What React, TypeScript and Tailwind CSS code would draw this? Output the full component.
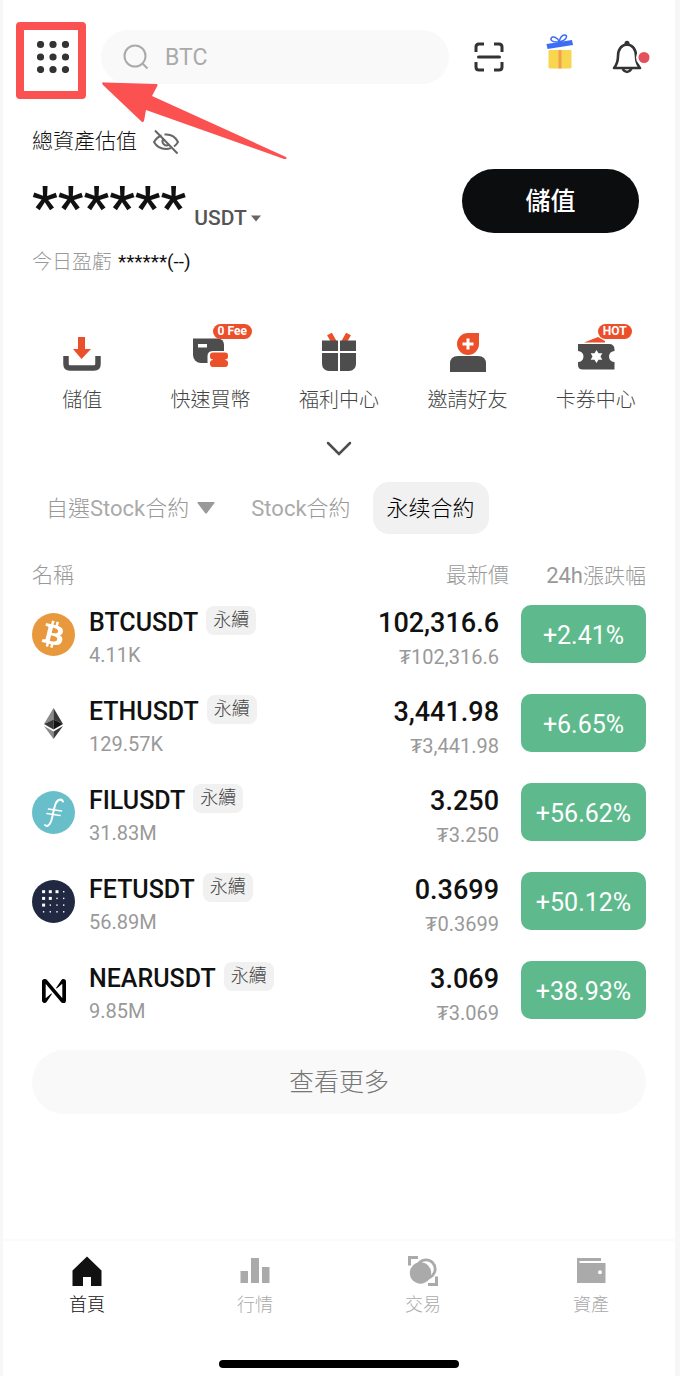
import type { ReactNode } from "react";
import { FaBtc } from "react-icons/fa";

const QUICK_ACTIONS: { label: string; icon: ReactNode; badge?: string }[] = [
  {
    label: "儲值",
    icon: (
      <>
        <path d="M6 24v8q0 4 4 4h24q4 0 4-4v-8" fill="none" stroke="#4d4d4d" strokeWidth="5.5" />
        <path d="M18 5h7v12h6l-9.500 10-8.500-10h5z" fill="#eb502b" />
      </>
    ),
  },
  {
    label: "快速買幣",
    badge: "0 Fee",
    icon: (
      <>
        <path d="M4 6.500h25a6 6 0 0 1 6 6V31H12a8 8 0 0 1-8-8z" fill="#4d4d4d" />
        <rect x="9" y="12" width="9" height="3.500" fill="#fff" />
        <path d="M18.500 32v-8q0-5 6-5H36v13z" fill="#fff" />
        <rect x="21" y="20.500" width="18" height="7" rx="3" fill="#eb502b" />
        <rect x="21" y="28" width="18" height="7" rx="3" fill="#eb502b" />
        <path d="M24 27h12v1.500H24z" fill="#eb502b" />
      </>
    ),
  },
  {
    label: "福利中心",
    icon: (
      <>
        <path d="m12.500 2 4.500 8M31.500 2 27 10" stroke="#eb502b" strokeWidth="5.500" />
        <path d="M5 8.500h16V19H5zM23 8.500h16V19H23zM5 21h16v18H12a7 7 0 0 1-7-7zM23 21h16v11a7 7 0 0 1-7 7h-9z" fill="#4d4d4d" />
      </>
    ),
  },
  {
    label: "邀請好友",
    icon: (
      <>
        <path d="M5 40v-8q0-8 8-8h20q8 0 8 8v8z" fill="#4d4d4d" />
        <path d="M23 1h11v11A11 11 0 1 1 23 1z" fill="#eb502b" />
        <path d="M23 6.500v11M17.500 12h11" stroke="#fff" strokeWidth="3" />
      </>
    ),
  },
  {
    label: "卡券中心",
    badge: "HOT",
    icon: (
      <>
        <path d="m10 10.500 14-5.500 7 4v1.500z" fill="#eb502b" />
        <path d="M4 12h31q5.500 0 5.500 5.500V19a5.500 5.500 0 0 0 0 11v7.500H9Q4 37.500 4 33v-3a5.500 5.500 0 0 0 0-11z" fill="#4d4d4d" />
        <path d="m22.500 18 2 3.300 3.800-.1-1.800 3.300 1.800 3.300-3.800-.1-2 3.300-2-3.300-3.800.1 1.800-3.300-1.800-3.300 3.800.1z" fill="#fff" />
      </>
    ),
  },
];

const FET_DOTS = [
  [1, 1, 1, 0],
  [1, 1, 0, 0],
  [1, 0, 0, 0],
  [0, 0, 0, 0],
];

const COINS: { name: string; volume: string; price: string; change: string; icon: ReactNode }[] = [
  {
    name: "BTCUSDT",
    volume: "4.11K",
    price: "102,316.6",
    change: "+2.41%",
    icon: (
      <span className="flex size-[43px] items-center justify-center rounded-full bg-[#e8983d] text-white">
        <FaBtc className="size-[27px] rotate-14" />
      </span>
    ),
  },
  {
    name: "ETHUSDT",
    volume: "129.57K",
    price: "3,441.98",
    change: "+6.65%",
    icon: (
      <svg viewBox="0 0 43 43" className="size-[43px]">
        <path d="M21.500 6 12 22l9.500-4.500z" fill="#8a8a8a" />
        <path d="m21.500 6 9.500 16-9.500-4.500z" fill="#393939" />
        <path d="m12 22 9.500-4.500v10z" fill="#393939" />
        <path d="m31 22-9.500-4.500v10z" fill="#141414" />
        <path d="m12 24 9.500 5.500v7.500z" fill="#8a8a8a" />
        <path d="m31 24-9.500 5.500v7.500z" fill="#393939" />
      </svg>
    ),
  },
  {
    name: "FILUSDT",
    volume: "31.83M",
    price: "3.250",
    change: "+56.62%",
    icon: (
      <svg viewBox="0 0 43 43" className="size-[43px]">
        <circle cx="21.500" cy="21.500" r="21.500" fill="#68bec9" />
        <g fill="none" stroke="#fff" strokeLinecap="round">
          <path d="M31 10.500c-1.500-3-5.500-2.500-7.500 2.500C21.500 18.500 21 24 19.500 29c-1.500 5-4.500 7.500-6.500 5" strokeWidth="2" />
          <path d="m16.500 18 13 2M15 22.500l13 2" strokeWidth="1.600" />
        </g>
      </svg>
    ),
  },
  {
    name: "FETUSDT",
    volume: "56.89M",
    price: "0.3699",
    change: "+50.12%",
    icon: (
      <svg viewBox="0 0 43 43" className="size-[43px]">
        <circle cx="21.500" cy="21.500" r="21.500" fill="#212842" />
        {FET_DOTS.map((row, y) =>
          row.map((big, x) => {
            const size = big ? 3 : 1.4;
            return (
              <rect
                key={`${x}-${y}`}
                x={11.6 + x * 6.7 - size / 2}
                y={11.7 + y * 6.7 - size / 2}
                width={size}
                height={size}
                fill="#fff"
              />
            );
          }),
        )}
      </svg>
    ),
  },
  {
    name: "NEARUSDT",
    volume: "9.85M",
    price: "3.069",
    change: "+38.93%",
    icon: (
      <span className="flex size-[43px] items-center justify-center">
        <svg viewBox="0 0 24 24" className="size-6">
          <path d="M21.443 0c-.89 0-1.714.46-2.18 1.218l-5.017 7.448a.533.533 0 0 0 .792.7l4.938-4.282a.2.2 0 0 1 .334.151v13.41a.2.2 0 0 1-.354.128L5.030.905A2.555 2.555 0 0 0 3.078 0h-.521A2.557 2.557 0 0 0 0 2.557v18.886a2.557 2.557 0 0 0 4.736 1.338l5.017-7.448a.533.533 0 0 0-.792-.7l-4.938 4.283a.2.2 0 0 1-.333-.152V5.352a.2.2 0 0 1 .354-.128l14.924 17.870c.486.574 1.200.905 1.952.906h.521A2.558 2.558 0 0 0 24 21.445V2.557A2.558 2.558 0 0 0 21.443 0Z" />
        </svg>
      </span>
    ),
  },
];

const NAV_ITEMS: { label: string; icon: ReactNode }[] = [
  {
    label: "首頁",
    icon: <path d="m16 1.500 14.500 14V31H20v-9h-8v9H1.500V15.500z" />,
  },
  {
    label: "行情",
    icon: <path d="M1.500 16H9v12H1.500zM12 3h8v25h-8zM23 12h7.500v16H23z" />,
  },
  {
    label: "交易",
    icon: (
      <>
        <path d="M1 1h10v3H4v6.500H1zM31 31H21v-3h7v-6.500h3z" />
        <circle cx="19" cy="14" r="9.200" fill="none" stroke="currentColor" strokeWidth="2.800" />
        <circle cx="13.500" cy="18" r="10.700" />
      </>
    ),
  },
  {
    label: "資產",
    icon: (
      <path
        fillRule="evenodd"
        d="M2 3h24v3H4.500v2h26v20H2zM25 15.200a2 2 0 1 0 0 4 2 2 0 0 0 0-4z"
      />
    ),
  },
];

function Header() {
  return (
    <header className="flex items-center pt-[30px]">
      <button aria-label="選單" className="relative mr-8 ml-[5px]">
        <svg viewBox="0 0 32 32" className="size-8" fill="#333">
          {[3.5, 16, 28.5].map((y) =>
            [3.5, 16, 28.5].map((x) => <circle key={`${x}-${y}`} cx={x} cy={y} r="3.600" />),
          )}
        </svg>
        {/* highlight box */}
        <span className="absolute -top-[19px] -right-[17px] -bottom-[26px] -left-[21px] rounded border-8 border-[#fb5151]" />
      </button>

      <label className="flex h-[54px] min-w-0 flex-1 items-center gap-4 rounded-full bg-[#f9f9f9] pl-[22px]">
        <svg viewBox="0 0 26 26" className="size-[26px] shrink-0" fill="none" stroke="#aaa" strokeWidth="2">
          <circle cx="12" cy="12" r="10.500" />
          <path d="m19 19 5.500 5.500" />
        </svg>
        <input
          aria-label="搜尋"
          placeholder="BTC"
          className="w-full min-w-0 bg-transparent pt-[2px] text-[23px] outline-none placeholder:text-[#aaa]"
        />
      </label>

      <button aria-label="掃描" className="ml-6">
        <svg viewBox="0 0 32 32" className="size-8" fill="none" stroke="#333" strokeWidth="3">
          <path d="M3 11V6q0-3 3-3h5M21 3h5q3 0 3 3v5M29 21v5q0 3-3 3h-5M11 29H6q-3 0-3-3v-5" />
          <path d="M5.500 16h21" strokeLinecap="round" />
        </svg>
      </button>
      <button aria-label="禮物" className="mb-3 ml-10">
        <svg viewBox="0 0 30 36" className="h-9 w-[30px]">
          <rect x="3.500" y="17" width="23" height="18.500" rx="1" fill="#f8d650" />
          <rect x="13.500" y="17" width="3" height="18.500" fill="#f0a24a" />
          <path d="m1.500 11 25.500-4 1 5L2.500 16z" fill="#3d6cf6" />
          <g fill="none" stroke="#3d6cf6" strokeWidth="1.500">
            <path d="M14.500 9C9 9.500 5.500 8 6 5.500c1-3 6.500-1.500 8.500 3.500z" />
            <path d="M14.500 9c0-4 2.500-7 5-7 4 0 2 5.500-5 7z" />
          </g>
        </svg>
      </button>
      <button aria-label="通知" className="-mr-1 ml-[37px]">
        <svg viewBox="0 0 38 34" className="h-[34px] w-[38px]">
          <g fill="none" stroke="#333" strokeWidth="2.600" strokeLinejoin="round">
            <path d="M2 28c3-3.500 4-6 4-12C6 9 10 4.500 15 4.500S24 9 24 16c0 6 1 8.500 4 12z" />
            <path d="M10.500 29q4.500 6 9 0" />
          </g>
          <circle cx="15" cy="3.300" r="2.500" fill="#333" />
          <circle cx="32" cy="17.500" r="8" fill="#fff" />
          <circle cx="32" cy="17.500" r="5.500" fill="#e6505c" />
        </svg>
      </button>
    </header>
  );
}

function Assets() {
  return (
    <section className="flex items-start justify-between pt-[42px] pr-[7px]">
      <div>
        <div className="flex h-8 items-center gap-4 text-[21px] font-light text-[#111]">
          總資產估值
          <button aria-label="顯示資產">
            <svg viewBox="0 0 26 26" className="size-[26px]" fill="none" stroke="#666" strokeWidth="2">
              <path d="M8.500 6.500C4.500 7.800 2.500 10.500 1 13c2.500 4.500 7 7 12 7 2 0 3.500-.300 5-.900" />
              <path d="M11.500 5.600c6-.600 11 2.400 13.500 7.400-1 1.800-2.300 3.300-4 4.500" />
              <path d="M10 10.500a4 4 0 0 0 6 5M2 1.500l22.500 23" />
            </svg>
          </button>
        </div>
        <div className="mt-2 flex h-16 items-end gap-2">
          <span className="h-16 text-[58px] leading-[82px] font-medium text-[#111]">******</span>
          <button className="flex items-center gap-1 text-[21px] leading-6 font-medium text-[#555]">
            USDT
            <svg viewBox="0 0 10 7" className="w-[10px]" fill="#666">
              <path d="M0 .500h10L5 6.500z" />
            </svg>
          </button>
        </div>
        <p className="mt-3 flex h-10 items-center gap-[6px] text-[19px] text-[#111]">
          <span className="text-[20px] font-light text-[#999]">今日盈虧</span>
          ******(--)
        </p>
      </div>
      <button className="mt-[43px] h-16 w-[177px] rounded-full bg-[#0c0d0f] pt-[2px] text-[25px] font-medium text-white">
        儲值
      </button>
    </section>
  );
}

function QuickActions() {
  return (
    <section className="px-[15px] pt-[50px]">
      <div className="grid grid-cols-5">
        {QUICK_ACTIONS.map((action) => (
          <button
            key={action.label}
            className="relative flex flex-col items-center gap-3 text-[20px] leading-8 font-light text-[#444]"
          >
            <svg viewBox="0 0 44 40" className="h-10 w-11">
              {action.icon}
            </svg>
            {action.badge && (
              <span className="absolute -top-2 left-1/2 ml-[2px] rounded-full bg-[#eb502b] px-[5px] text-[12px] leading-[15px] font-bold text-white">
                {action.badge}
              </span>
            )}
            {action.label}
          </button>
        ))}
      </div>
      <button aria-label="展開" className="mx-auto mt-[25px] block">
        <svg viewBox="0 0 26 16" className="h-4 w-[26px]" fill="none" stroke="#4d4d4d" strokeWidth="2.500">
          <path d="m2 2 11 11L24 2" strokeLinecap="round" />
        </svg>
      </button>
    </section>
  );
}

function Markets() {
  return (
    <section className="px-[29px] pt-[25px]">
      <div className="flex items-center gap-2 text-[22px] text-[#aaa]">
        <button className="flex h-[52px] items-center gap-2 px-[14px]">
          <span className="font-light text-[#999]">自選<span className="font-normal text-[#aaa]">Stock</span>合約</span>
          <svg viewBox="0 0 18 12" className="w-[18px]" fill="#999">
            <path d="M1 0h16q1 0 .500 1l-7.500 10q-1 1-2 0L.500 1Q0 0 1 0z" />
          </svg>
        </button>
        <button className="h-[52px] px-[14px]">
          Stock<span className="font-light text-[#999]">合約</span>
        </button>
        <button className="h-[52px] rounded-2xl bg-[#f1f1f1] px-[14px] font-light text-black">永续合約</button>
      </div>

      <table className="mt-6 w-full border-collapse">
        <thead className="text-[21px] text-[#999]">
          <tr className="h-9">
            <th className="p-0 text-left font-light">名稱</th>
            <th className="p-0 pr-3 text-right font-light">最新價</th>
            <th className="w-[125px] p-0 text-right font-light"><span className="text-[22px] font-normal">24h</span>漲跌幅</th>
          </tr>
        </thead>
        <tbody>
          {COINS.map((coin) => (
            <tr key={coin.name} className="h-[89px] align-top">
              <td className="p-0 pt-3">
                <div className="flex gap-[14px]">
                  <div className="pt-[7px]">{coin.icon}</div>
                  <div>
                    <div className="flex h-[34px] items-center gap-2">
                      <span className="text-[25px] font-medium text-[#111]">{coin.name}</span>
                      <span className="mb-[6px] h-[29px] rounded-lg bg-[#f1f1f1] px-[7px] text-[18px] leading-[28px] font-light text-[#444]">
                        永續
                      </span>
                    </div>
                    <div className="text-[20px] leading-[30px] text-[#999]">{coin.volume}</div>
                  </div>
                </div>
              </td>
              <td className="p-0 pt-3 pr-[22px] text-right">
                <div className="text-[27px] leading-[34px] font-medium text-[#111]">{coin.price}</div>
                <div className="text-[20px] leading-[34px] text-[#999]">₮{coin.price}</div>
              </td>
              <td className="p-0 pt-[11px]">
                <button className="h-[58px] w-full rounded-[10px] bg-[#5eba8c] pt-1 text-[25px] text-white">
                  {coin.change}
                </button>
              </td>
            </tr>
          ))}
        </tbody>
      </table>

      <button className="mt-[11px] h-16 w-full rounded-full bg-[#f9f9f9] pt-[2px] text-[25px] font-light text-[#777]">
        查看更多
      </button>
    </section>
  );
}

function BottomNav() {
  return (
    <nav className="mt-auto border-t-2 border-[#fbfbfb] pt-[14px] pb-2">
      <div className="grid grid-cols-4">
        {NAV_ITEMS.map((item, i) => (
          <a
            key={item.label}
            href="#"
            className={
              "flex flex-col items-center gap-1 text-[18px] leading-7 font-light " +
              (i === 0 ? "text-[#111]" : "text-[#aaa]")
            }
          >
            <svg viewBox="0 0 32 32" className="size-8" fill="currentColor">
              {item.icon}
            </svg>
            {item.label}
          </a>
        ))}
      </div>
      <div className="mx-auto mt-[41px] h-2 w-60 rounded-full bg-black" />
    </nav>
  );
}

export default function App() {
  return (
    <div className="min-h-screen bg-[#f7f7f7] pr-[5px] pl-[3px] font-['Roboto','Noto_Sans_CJK_TC',sans-serif]">
      <main className="relative flex min-h-screen flex-col bg-white">
        <div className="px-[29px]">
          <Header />
          <Assets />
        </div>
        <QuickActions />
        <Markets />
        <BottomNav />

        {/* pointer to the menu button */}
        <svg viewBox="0 0 186 78" className="pointer-events-none absolute top-[82px] left-[98px] h-[78px] w-[186px]" fill="#fb5151">
          <path d="M1 1q1-1 3-.500L55 2q2 0 1.500 1.500L51 14l134 61q1 1 0 2h-2L45 28l-2 11q-1 1.500-2 1L2 3z" />
        </svg>
      </main>
    </div>
  );
}
